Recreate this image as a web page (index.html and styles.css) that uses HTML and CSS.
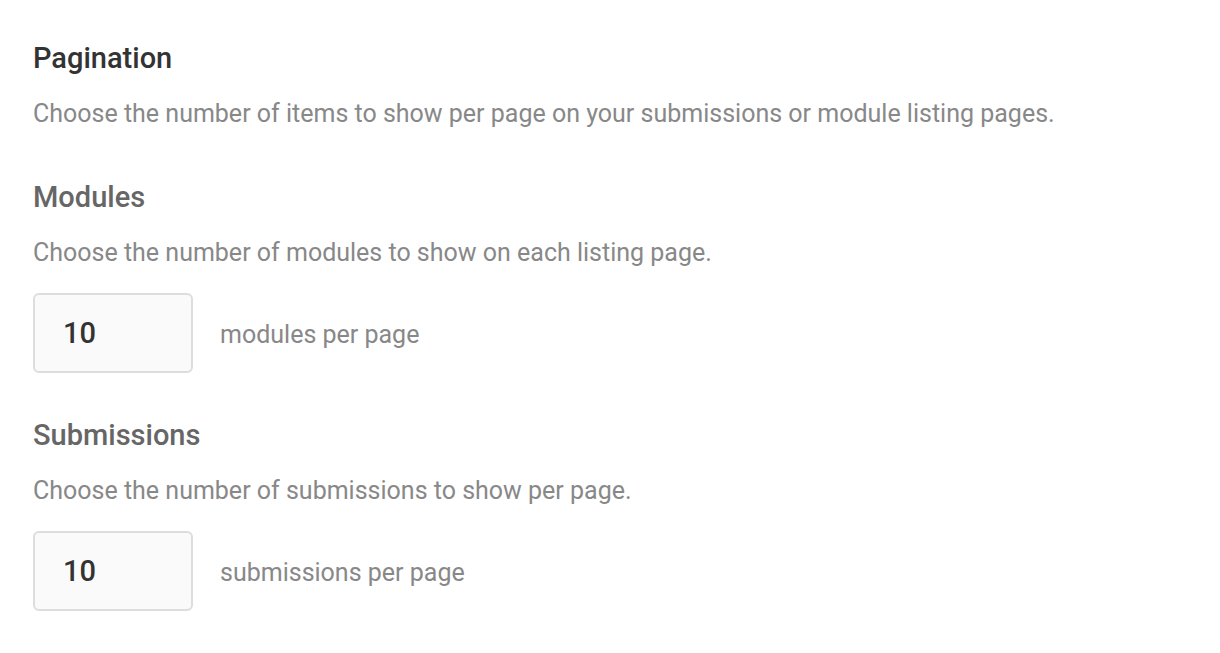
FILE: index.html
```html
<!DOCTYPE html>
<html>
<head>
<meta charset="utf-8">
<link rel="stylesheet" href="styles.css">
</head>
<body>
<div class="settings">
  <section class="block">
    <h2 class="block-title">Pagination</h2>
    <p class="desc">Choose the number of items to show per page on your submissions or module listing pages.</p>
  </section>
  <section class="field">
    <h3 class="field-title">Modules</h3>
    <p class="desc">Choose the number of modules to show on each listing page.</p>
    <div class="row">
      <input class="num" type="text" value="10">
      <span class="unit">modules per page</span>
    </div>
  </section>
  <section class="field">
    <h3 class="field-title">Submissions</h3>
    <p class="desc">Choose the number of submissions to show per page.</p>
    <div class="row">
      <input class="num" type="text" value="10">
      <span class="unit">submissions per page</span>
    </div>
  </section>
</div>
</body>
</html>
```
FILE: styles.css
```css
html, body {
  margin: 0;
  padding: 0;
  background: #fff;
}
body {
  font-family: Roboto, "Liberation Sans", sans-serif;
}
.settings {
  padding: 38px 33px 0;
}
.block-title {
  margin: 0;
  font-size: 29px;
  line-height: 40px;
  font-weight: 500;
  color: #333;
}
.desc {
  margin: 20px 0 0;
  font-size: 25px;
  line-height: 32px;
  font-weight: 400;
  color: #888;
}
.field {
  margin-top: 47px;
}
.field + .field {
  margin-top: 42px;
}
.field-title {
  margin: 0;
  font-size: 29px;
  line-height: 40px;
  font-weight: 500;
  color: #666;
}
.row {
  display: flex;
  align-items: center;
  gap: 27px;
  margin-top: 24px;
}
.num {
  box-sizing: border-box;
  width: 160px;
  height: 80px;
  margin: 0;
  padding: 0 28px;
  border: 2px solid #ddd;
  border-radius: 6px;
  background: #fafafa;
  font-family: Roboto, "Liberation Sans", sans-serif;
  font-size: 29px;
  font-weight: 500;
  color: #333;
  outline: none;
}
.unit {
  padding-top: 3px;
  font-size: 25px;
  color: #888;
}
```
